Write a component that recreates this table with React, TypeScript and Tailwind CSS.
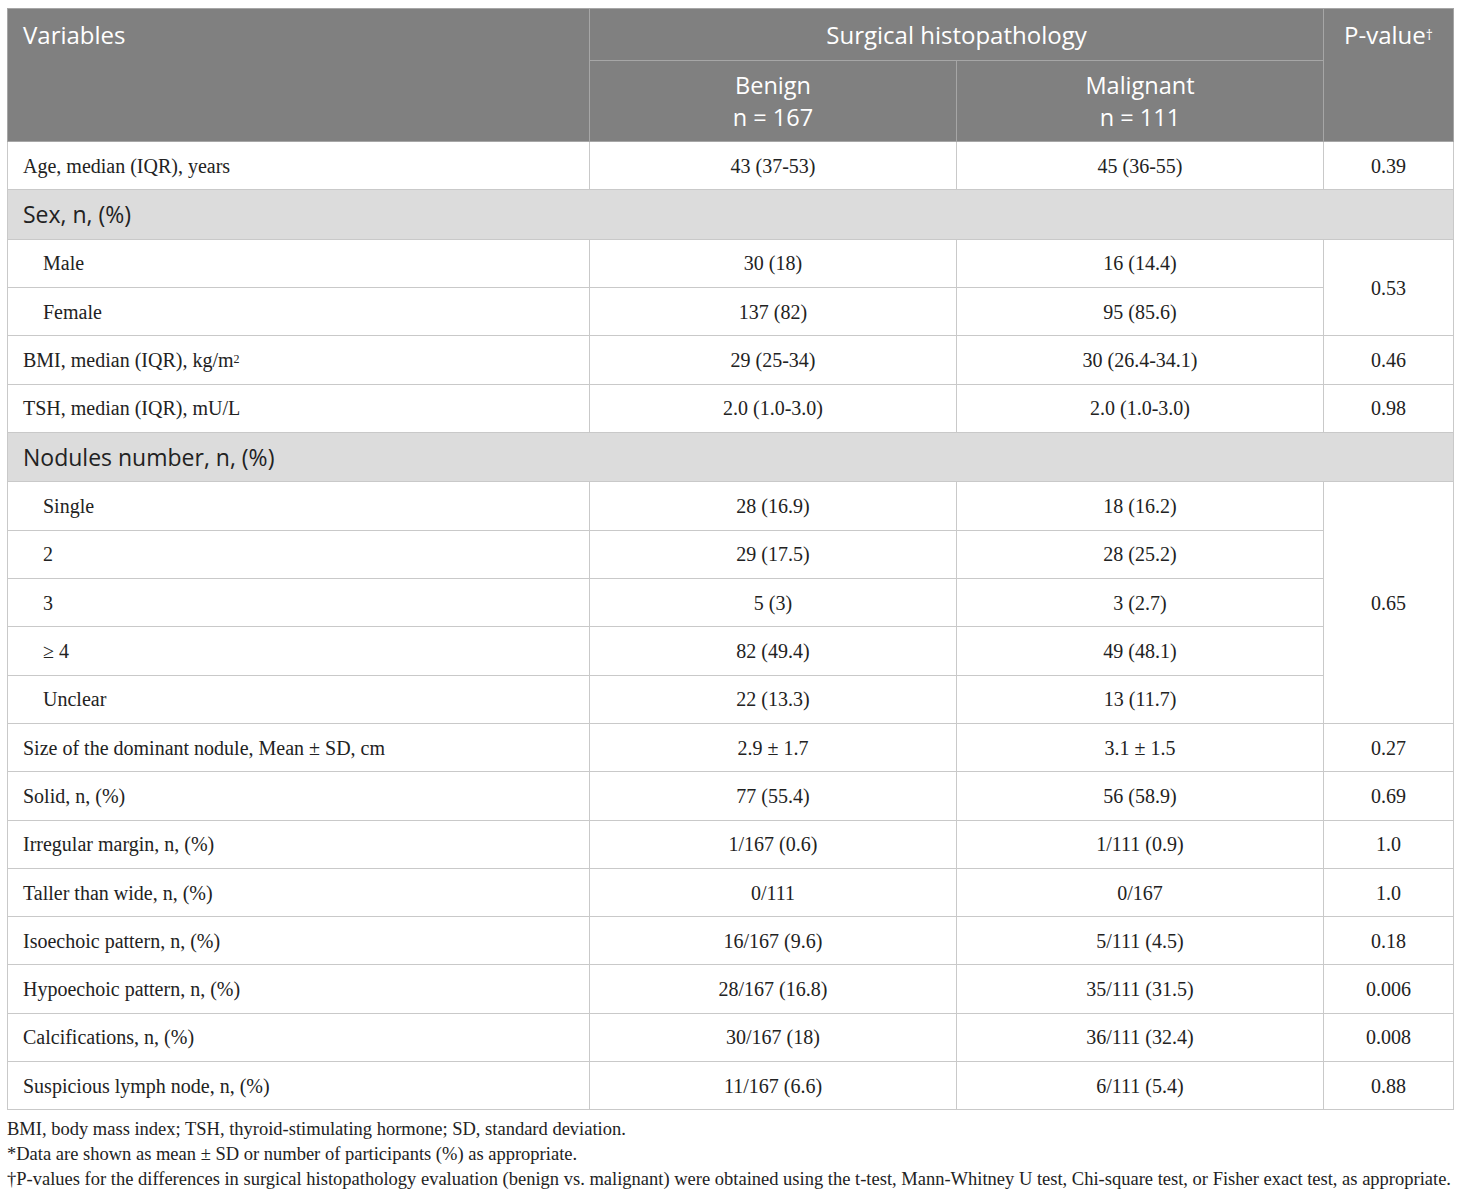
const serif = "font-['Liberation_Serif','Times_New_Roman',serif]";
const sans = "font-['Open_Sans','Noto_Sans',sans-serif]";

type Row =
	| { kind: "group"; label: string }
	| { kind: "data"; label: React.ReactNode; benign: string; malignant: string; p?: string; pSpan?: number; indent?: boolean };

const rows: Row[] = [
	{ kind: "data", label: "Age, median (IQR), years", benign: "43 (37-53)", malignant: "45 (36-55)", p: "0.39" },
	{ kind: "group", label: "Sex, n, (%)" },
	{ kind: "data", label: "Male", benign: "30 (18)", malignant: "16 (14.4)", p: "0.53", pSpan: 2, indent: true },
	{ kind: "data", label: "Female", benign: "137 (82)", malignant: "95 (85.6)", indent: true },
	{
		kind: "data",
		label: (
			<>
				BMI, median (IQR), kg/m<sup className="text-[12px] relative -top-[4px]">2</sup>
			</>
		),
		benign: "29 (25-34)",
		malignant: "30 (26.4-34.1)",
		p: "0.46",
	},
	{ kind: "data", label: "TSH, median (IQR), mU/L", benign: "2.0 (1.0-3.0)", malignant: "2.0 (1.0-3.0)", p: "0.98" },
	{ kind: "group", label: "Nodules number, n, (%)" },
	{ kind: "data", label: "Single", benign: "28 (16.9)", malignant: "18 (16.2)", p: "0.65", pSpan: 5, indent: true },
	{ kind: "data", label: "2", benign: "29 (17.5)", malignant: "28 (25.2)", indent: true },
	{ kind: "data", label: "3", benign: "5 (3)", malignant: "3 (2.7)", indent: true },
	{ kind: "data", label: "≥ 4", benign: "82 (49.4)", malignant: "49 (48.1)", indent: true },
	{ kind: "data", label: "Unclear", benign: "22 (13.3)", malignant: "13 (11.7)", indent: true },
	{ kind: "data", label: "Size of the dominant nodule, Mean ± SD, cm", benign: "2.9 ± 1.7", malignant: "3.1 ± 1.5", p: "0.27" },
	{ kind: "data", label: "Solid, n, (%)", benign: "77 (55.4)", malignant: "56 (58.9)", p: "0.69" },
	{ kind: "data", label: "Irregular margin, n, (%)", benign: "1/167 (0.6)", malignant: "1/111 (0.9)", p: "1.0" },
	{ kind: "data", label: "Taller than wide, n, (%)", benign: "0/111", malignant: "0/167", p: "1.0" },
	{ kind: "data", label: "Isoechoic pattern, n, (%)", benign: "16/167 (9.6)", malignant: "5/111 (4.5)", p: "0.18" },
	{ kind: "data", label: "Hypoechoic pattern, n, (%)", benign: "28/167 (16.8)", malignant: "35/111 (31.5)", p: "0.006" },
	{ kind: "data", label: "Calcifications, n, (%)", benign: "30/167 (18)", malignant: "36/111 (32.4)", p: "0.008" },
	{ kind: "data", label: "Suspicious lymph node, n, (%)", benign: "11/167 (6.6)", malignant: "6/111 (5.4)", p: "0.88" },
];

const cell = "border border-[#c9c9c9]";

export default function App() {
	return (
		<div className="bg-white w-[1460px] min-h-[1197px] pt-[8px] pl-[7px]">
			<table className="border-collapse table-fixed w-[1446px] text-[#222222]">
				<colgroup>
					<col className="w-[582px]" />
					<col className="w-[367px]" />
					<col className="w-[367px]" />
					<col className="w-[130px]" />
				</colgroup>
				<thead className={`${sans} text-white bg-[#808080] text-[24px] leading-[29px]`}>
					<tr className="h-[52px]">
						<th rowSpan={2} className="border border-[#a6a6a6] text-left font-normal align-top px-[15px] pt-[11px]">
							Variables
						</th>
						<th colSpan={2} className="border border-[#a6a6a6] font-normal">
							Surgical histopathology
						</th>
						<th rowSpan={2} className="border border-[#a6a6a6] font-normal align-top pt-[11px]">
							P-value<span className="text-[14px] relative -top-[4px]">†</span>
						</th>
					</tr>
					<tr className="h-[81px] text-[23.5px] leading-[32px]">
						<th className="border border-[#a6a6a6] font-normal">
							<div>Benign</div>
							<div>n = 167</div>
						</th>
						<th className="border border-[#a6a6a6] font-normal">
							<div>Malignant</div>
							<div>n = 111</div>
						</th>
					</tr>
				</thead>
				<tbody className={`${serif} text-[20px]`}>
					{rows.map((r, i) =>
						r.kind === "group" ? (
							<tr key={i} className="h-[49.5px] bg-[#dcdcdc]">
								<td colSpan={4} className={`${cell} ${sans} text-[23px] px-[15px]`}>
									{r.label}
								</td>
							</tr>
						) : (
							<tr key={i} className="h-[48.3px]">
								<td className={`${cell} ${r.indent ? "pl-[35px]" : "pl-[15px]"}`}>{r.label}</td>
								<td className={`${cell} text-center`}>{r.benign}</td>
								<td className={`${cell} text-center`}>{r.malignant}</td>
								{r.p && (
									<td rowSpan={r.pSpan} className={`${cell} text-center`}>
										{r.p}
									</td>
								)}
							</tr>
						),
					)}
				</tbody>
			</table>
			<div className={`${serif} text-[18.5px] leading-[25px] text-[#222222] mt-[7px]`}>
				<p>BMI, body mass index; TSH, thyroid-stimulating hormone; SD, standard deviation.</p>
				<p>*Data are shown as mean ± SD or number of participants (%) as appropriate.</p>
				<p className="whitespace-nowrap">
					†P-values for the differences in surgical histopathology evaluation (benign vs. malignant) were obtained using the
					t-test, Mann-Whitney U test, Chi-square test, or Fisher exact test, as appropriate.
				</p>
			</div>
		</div>
	);
}
